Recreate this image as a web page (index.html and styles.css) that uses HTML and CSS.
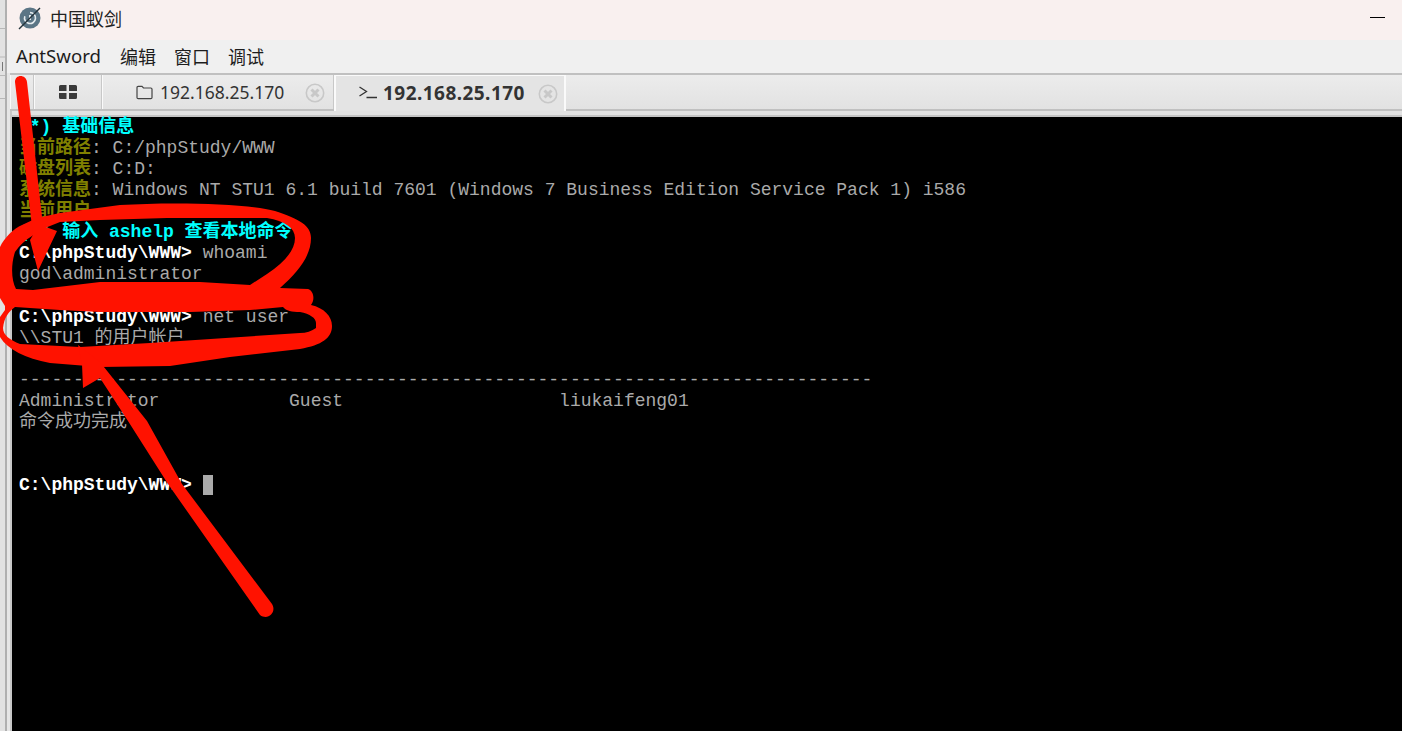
FILE: index.html
```html
<!DOCTYPE html>
<html lang="zh">
<head>
<meta charset="utf-8">
<title>中国蚁剑</title>
<link rel="stylesheet" href="styles.css">
</head>
<body>
<div class="screen">
  <div class="behind">
    <svg viewBox="0 0 5 731" width="5" height="731"><path d="M0 28.500H5M0 57H5M0 75.500H5M0 98.500H5" stroke="#b8b8b8" stroke-width="1"/><path d="M2.500 62V71" stroke="#777" stroke-width="1"/></svg>
  </div>
  <div class="window">
    <header class="titlebar">
      <svg class="logo" viewBox="0 0 24 24" width="24" height="24">
        <circle cx="12" cy="12" r="10.500" fill="#5b7585"/>
        <path d="M12 6.500a5.500 5.500 0 1 1-5.200 3.700" fill="none" stroke="#e6ecef" stroke-width="1.600"/>
        <path d="M12 9v5" stroke="#e6ecef" stroke-width="2"/>
        <path d="M1 23L22 2" stroke="#26343c" stroke-width="1.400"/>
      </svg>
      <span class="app-name">中国蚁剑</span>
      <span class="minimize"></span>
    </header>
    <nav class="menubar">
      <span class="menu-item menu-latin">AntSword</span>
      <span class="menu-item">编辑</span>
      <span class="menu-item">窗口</span>
      <span class="menu-item">调试</span>
    </nav>
    <div class="content">
      <div class="tabbar">
        <div class="tab tab-stub"></div>
        <div class="tab tab-home">
          <svg viewBox="0 0 18 14" width="18" height="14"><path d="M0 1.500a1.500 1.500 0 0 1 1.500-1.500H7.500V6H0zM10 0h6.500A1.500 1.500 0 0 1 18 1.500V6H10zM0 8H7.500v6H1.500A1.500 1.500 0 0 1 0 12.500zM10 8h8v4.500a1.500 1.500 0 0 1-1.500 1.500H10z" fill="#3a3a3a"/></svg>
        </div>
        <div class="tab tab-files">
          <svg class="folder" viewBox="0 0 17 15" width="17" height="15"><path d="M1 12.500V2.500A1.200 1.200 0 0 1 2.200 1.300H6L7.500 3H14.800A1.200 1.200 0 0 1 16 4.200V12.500A1.200 1.200 0 0 1 14.800 13.700H2.200A1.200 1.200 0 0 1 1 12.500Z" fill="none" stroke="#444" stroke-width="1.200"/></svg>
          <span>192.168.25.170</span>
          <svg class="close close-files" viewBox="0 0 20 20" width="20" height="20"><circle cx="10" cy="10" r="8.700" fill="none" stroke="#c8c8c8" stroke-width="1.600"/><path d="M6.500 6.500l7 7M13.500 6.500l-7 7" stroke="#c8c8c8" stroke-width="3"/></svg>
        </div>
        <div class="tab tab-term">
          <svg class="prompt-icon" viewBox="0 0 18 13" width="18" height="13"><path d="M0.500 1l7 4.500-7 4.500M7.500 11.500H18" fill="none" stroke="#333" stroke-width="1.300"/></svg>
          <b class="tab-title">192.168.25.170</b>
          <svg class="close" viewBox="0 0 20 20" width="20" height="20"><circle cx="10" cy="10" r="8.700" fill="none" stroke="#c8c8c8" stroke-width="1.600"/><path d="M6.500 6.500l7 7M13.500 6.500l-7 7" stroke="#c8c8c8" stroke-width="3"/></svg>
        </div>
      </div>
      <div class="tab-gap"></div>
      <main class="terminal">
<div class="ln cyan">(*) 基础信息</div>
<div class="ln"><span class="olive">当前路径</span>: C:/phpStudy/WWW</div>
<div class="ln"><span class="olive">磁盘列表</span>: C:D:</div>
<div class="ln"><span class="olive">系统信息</span>: Windows NT STU1 6.1 build 7601 (Windows 7 Business Edition Service Pack 1) i586</div>
<div class="ln"><span class="olive">当前用户</span></div>
<div class="ln cyan">(*) 输入 ashelp 查看本地命令</div>
<div class="ln"><span class="white">C:\phpStudy\WWW&gt;</span> whoami</div>
<div class="ln">god\administrator</div>
<div class="ln"></div>
<div class="ln"><span class="white">C:\phpStudy\WWW&gt;</span> net user</div>
<div class="ln">\\STU1 的用户帐户</div>
<div class="ln"></div>
<div class="ln">-------------------------------------------------------------------------------</div>
<div class="ln">Administrator            Guest                    liukaifeng01</div>
<div class="ln">命令成功完成</div>
<div class="ln"></div>
<div class="ln"></div>
<div class="ln"><span class="white">C:\phpStudy\WWW&gt;</span> <span class="cursor"></span></div>
      </main>
    </div>
  </div>
  <svg class="scribble" viewBox="0 0 1402 731" width="1402" height="731">
    <path fill-rule="evenodd" fill="#ff1200" d="M0 247C4 238 14 228 22 225L37 218L60 213L90 209L120 205C170 202 245 203 275 211C300 219 311 226 311 238C311 256 298 272 280 288L308 289C314 291 315 300 311 305C324 308 332 316 332 326C332 338 322 345 300 349L230 357L170 366L100 367L50 363C25 358 8 350 0 337V317L5 310V306L0 298Z
    M15 252C20 245 25 240 32 236L45 228L60 222L100 220L167 218H267C285 221 295 228 295 238C295 250 285 262 267 274L250 285L200 282H100L33 290L16 289C11 280 11 264 15 252Z
    M15 307L60 310L100 312H190L250 310L283 307C286 311 292 312 300 312C310 314 316 318 316 323V328C312 331 306 333 300 333L150 343L80 347L20 344C10 340 3 335 3 328C4 318 8 312 15 307Z"/>
    <path fill="#ff1200" d="M15 82C15 74 26 74 27 82L43 226L57 231L38 271L30 240L33 235Z"/>
    <path fill="#ff1200" d="M78 345L100 362L147 421L182 484L272 604C277 612 268 621 260 615L168 484L128 421L100 378L83 388L82 364Z"/>
  </svg>
</div>
</body>
</html>
```

FILE: styles.css
```css
* { box-sizing: border-box; }
html, body { margin: 0; padding: 0; height: 100%; overflow: hidden; }
body { background: #000; }
.screen { position: relative; display: flex; width: 1402px; height: 731px; overflow: hidden; }
.behind { width: 5px; flex: none; background: #e2e2e2; }
.behind svg { display: block; }
.window { flex: 1; display: flex; flex-direction: column; min-width: 0; border-left: 2px solid #b0b0b0; background: #e6e6e6; }
.titlebar { height: 40px; flex: none; display: flex; align-items: center; background: #f9f0ef; padding: 0 0 4px 11px; font-family: "Noto Sans CJK SC", sans-serif; font-size: 18px; color: #222; }
.logo { flex: none; }
.app-name { margin-left: 8px; }
.minimize { width: 15px; height: 1px; background: #000; margin: -1px 17px 0 auto; }
.menubar { height: 33px; flex: none; display: flex; align-items: center; gap: 18px; background: #f0f0f0; padding: 0 0 2px 9px; font-size: 18px; color: #1d1d1d; }
.menu-item { font-family: "Noto Sans CJK SC", sans-serif; }
.menu-latin { font-family: "Noto Sans", sans-serif; font-size: 18.600px; margin-right: 1px; }
.content { flex: 1; display: flex; flex-direction: column; min-height: 0; margin-left: 3px; border-left: 2px solid #c8c8c8; }
.tabbar { height: 38px; flex: none; display: flex; align-items: stretch; background: linear-gradient(#ececec, #e2e2e2); border-top: 2px solid #c0c0c0; border-bottom: 2px solid #c0c0c0; margin-left: -2px; }
.tab { display: flex; align-items: center; border-right: 1px solid #c8c8c8; border-left: 1px solid #fafafa; font-family: "Noto Sans", "Liberation Sans", sans-serif; font-size: 17.500px; color: #333; }
.tab-stub { width: 24px; }
.tab-home { width: 68px; justify-content: center; }
.tab-files { width: 232px; padding-left: 33px; }
.tab-term { width: 232px; padding: 0 0 2px 23px; border-top: 1px solid #fafafa; border-left: 2px solid #fafafa; border-right: 2px solid #fafafa; margin: 0 0 -2px 0; background: #e4e4e4; position: relative; }
.folder { margin-right: 7px; }
.prompt-icon { margin-right: 6px; }
.tab-title { font-size: 19px; letter-spacing: 0.450px; }
.close { margin: 2px 0 0 13px; }
.close-files { margin-left: 21px; }
.tab-gap { height: 6px; flex: none; background: #e2e2e2; border-bottom: 2px solid #c4c4c4; }
.terminal { flex: 1; padding-left: 7px; background: #000; color: #aaa; font-family: "Liberation Mono", "Noto Sans CJK SC", monospace; font-size: 18px; }
.ln { height: 21.070px; line-height: 21.070px; white-space: pre; }
.cyan { color: #00ffff; font-weight: bold; }
.olive { color: #808000; font-weight: bold; }
.white { color: #fff; font-weight: bold; }
.cursor { display: inline-block; width: 10.800px; height: 20px; background: #aaa; vertical-align: -5px; }
.scribble { position: absolute; left: 0; top: 0; pointer-events: none; }
```
